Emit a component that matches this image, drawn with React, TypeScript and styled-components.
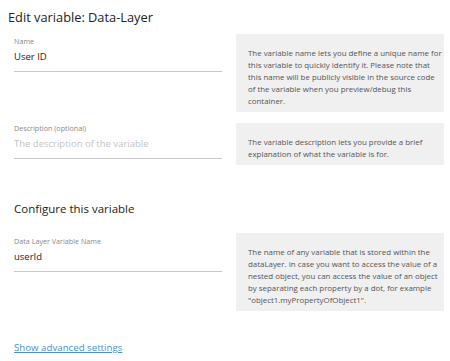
import React from "react";
import styled, { createGlobalStyle } from "styled-components";

const Global = createGlobalStyle`
  html, body {
    margin: 0;
    padding: 0;
    background: #fff;
  }
  body {
    font-family: "Open Sans", "Noto Sans", sans-serif;
    color: #333;
  }
`;

const PAGE = styled.div`
  width: 450px;
  height: 361px;
  overflow: hidden;
  padding: 7px 6px 0 8px;
  box-sizing: border-box;
`;

const TITLE = styled.h1`
  margin: 0;
  font-size: 12.8px;
  line-height: 20px;
  font-weight: 400;
  color: #222;
`;

const ROW = styled.div<{ $top: number }>`
  display: flex;
  align-items: flex-start;
  gap: 14px;
  margin-top: ${p => p.$top}px;
  padding-left: 6px;
`;

const FIELD = styled.div<{ $pad: number }>`
  width: 208px;
  padding-top: ${p => p.$pad}px;
  display: flex;
  flex-direction: column;
  gap: 4px;
`;

const LABEL = styled.label`
  font-size: 7.2px;
  line-height: 10px;
  color: #8a8a8a;
`;

const INPUT = styled.input`
  border: 0;
  border-bottom: 1px solid #c8c8c8;
  outline: none;
  padding: 0 0 7px 0;
  height: 14px;
  font-family: inherit;
  font-size: 9.5px;
  line-height: 14px;
  color: #222;
  background: transparent;

  &::placeholder {
    color: #c4c4c4;
  }
`;

const HINT = styled.div`
  width: 208px;
  box-sizing: border-box;
  background: #f0f0f0;
  padding: 13px 8px 5px 12px;
  font-size: 7.9px;
  line-height: 12px;
  white-space: nowrap;
  color: #555;
`;

const SECTION = styled.h2`
  margin: 36px 0 0 6px;
  font-size: 11.5px;
  line-height: 16px;
  font-weight: 400;
  color: #222;
`;

const LINK = styled.a`
  display: inline-block;
  margin: 30px 0 0 6px;
  font-size: 9.7px;
  line-height: 14px;
  color: #4a8fd9;
  text-decoration: underline;
  cursor: pointer;
`;

export default function App() {
  return (
    <>
      <Global />
      <PAGE>
        <TITLE>Edit variable: Data-Layer</TITLE>

        <ROW $top={7}>
          <FIELD $pad={2}>
            <LABEL>Name</LABEL>
            <INPUT defaultValue="User ID" />
          </FIELD>
          <HINT>
            The variable name lets you define a unique name for<br />
            this variable to quickly identify it. Please note that<br />
            this name will be publicly visible in the source code<br />
            of the variable when you preview/debug this<br />
            container.
          </HINT>
        </ROW>

        <ROW $top={11}>
          <FIELD $pad={0}>
            <LABEL>Description (optional)</LABEL>
            <INPUT placeholder="The description of the variable" />
          </FIELD>
          <HINT>
            The variable description lets you provide a brief<br />
            explanation of what the variable is for.
          </HINT>
        </ROW>

        <SECTION>Configure this variable</SECTION>

        <ROW $top={16}>
          <FIELD $pad={3}>
            <LABEL>Data Layer Variable Name</LABEL>
            <INPUT defaultValue="userId" />
          </FIELD>
          <HINT>
            The name of any variable that is stored within the<br />
            dataLayer. In case you want to access the value of a<br />
            nested object, you can access the value of an object<br />
            by separating each property by a dot, for example<br />
            "object1.myPropertyOfObject1".
          </HINT>
        </ROW>

        <LINK>Show advanced settings</LINK>
      </PAGE>
    </>
  );
}
